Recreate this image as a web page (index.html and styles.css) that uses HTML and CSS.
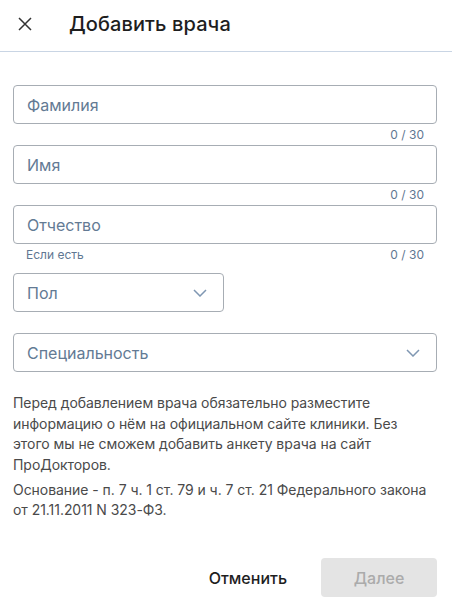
FILE: index.html
```html
<!DOCTYPE html>
<html lang="ru">
<head>
<meta charset="utf-8">
<link rel="stylesheet" href="styles.css">
</head>
<body>
<div class="dialog">
  <header class="header">
    <button class="close" aria-label="Закрыть">
      <svg width="14" height="14" viewBox="0 0 14 14"><path d="M1 1L13 13M13 1L1 13" stroke="#333" stroke-width="1.5" fill="none"/></svg>
    </button>
    <h1 class="title">Добавить врача</h1>
  </header>
  <main class="form">
    <div class="field">
      <div class="input"><span class="placeholder">Фамилия</span></div>
      <div class="helper"><span></span><span>0 / 30</span></div>
    </div>
    <div class="field">
      <div class="input"><span class="placeholder">Имя</span></div>
      <div class="helper"><span></span><span>0 / 30</span></div>
    </div>
    <div class="field">
      <div class="input"><span class="placeholder">Отчество</span></div>
      <div class="helper"><span>Если есть</span><span>0 / 30</span></div>
    </div>
    <div class="input select select-small">
      <span class="placeholder">Пол</span>
      <svg class="chev" width="14" height="8" viewBox="0 0 14 8"><path d="M1 1L7 7L13 1" stroke="#7f97b2" stroke-width="1.5" fill="none"/></svg>
    </div>
    <div class="input select select-wide">
      <span class="placeholder">Специальность</span>
      <svg class="chev" width="14" height="8" viewBox="0 0 14 8"><path d="M1 1L7 7L13 1" stroke="#7f97b2" stroke-width="1.5" fill="none"/></svg>
    </div>
    <div class="note">
      <p>Перед добавлением врача обязательно разместите информацию о нём на официальном сайте клиники. Без этого мы не сможем добавить анкету врача на сайт ПроДокторов.</p>
      <p>Основание - п. 7 ч. 1 ст. 79 и ч. 7 ст. 21 Федерального закона от 21.11.2011 N 323-ФЗ.</p>
    </div>
  </main>
  <footer class="footer">
    <button class="btn btn-cancel">Отменить</button>
    <button class="btn btn-next" disabled>Далее</button>
  </footer>
</div>
</body>
</html>
```

FILE: styles.css
```css
* { box-sizing: border-box; }
html, body { margin: 0; padding: 0; background: #fff; }
body {
  font-family: Inter, "Noto Sans", "Liberation Sans", sans-serif;
  color: #222;
  width: 452px;
}
.dialog {
  display: flex;
  flex-direction: column;
  min-height: 609px;
}
.header {
  height: 52px;
  display: flex;
  align-items: center;
  border-bottom: 1px solid #c9d5e4;
  padding-left: 18px;
  padding-bottom: 3px;
}
.close {
  border: 0; background: none; padding: 0;
  width: 14px; height: 14px;
  display: flex;
  margin-right: 37px;
}
.title {
  margin: 0;
  font-size: 20px;
  font-weight: 500;
  color: #1e1e1e;
  letter-spacing: 0.1px;
}
.form {
  padding: 33px 15px 0 13px;
  display: flex;
  flex-direction: column;
}
.input {
  height: 39px;
  border: 1px solid #a7adb4;
  border-radius: 4px;
  display: flex;
  align-items: center;
  padding: 0 13px;
}
.placeholder {
  font-size: 16px;
  color: #637a94;
}
.helper {
  height: 21px;
  display: flex;
  justify-content: space-between;
  font-size: 12px;
  color: #5f7792;
  padding: 4px 13px 0 13px;
  line-height: 14px;
}
.select { justify-content: space-between; padding-right: 16px; }
.select-small { width: 211px; margin-top: 8px; }
.select-wide { margin-top: 21px; }
.note {
  margin-top: 21px;
  font-size: 14px;
  line-height: 20.5px;
  color: #4a4a4a;
  margin-right: 7px;
  letter-spacing: -0.05px;
}
.note p { margin: 0 0 4.5px; }
.footer {
  margin-top: auto;
  display: flex;
  justify-content: flex-end;
  align-items: center;
  gap: 18px;
  padding: 0 15px 12px 0;
}
.btn {
  font-family: inherit;
  font-size: 16px;
  font-weight: 500;
  border: 0;
  border-radius: 4px;
  height: 39px;
}
.btn-cancel { background: none; color: #1e1e1e; padding: 0 16px; }
.btn-next {
  width: 116px;
  background: #e4e4e4;
  color: #ababab;
}
```
